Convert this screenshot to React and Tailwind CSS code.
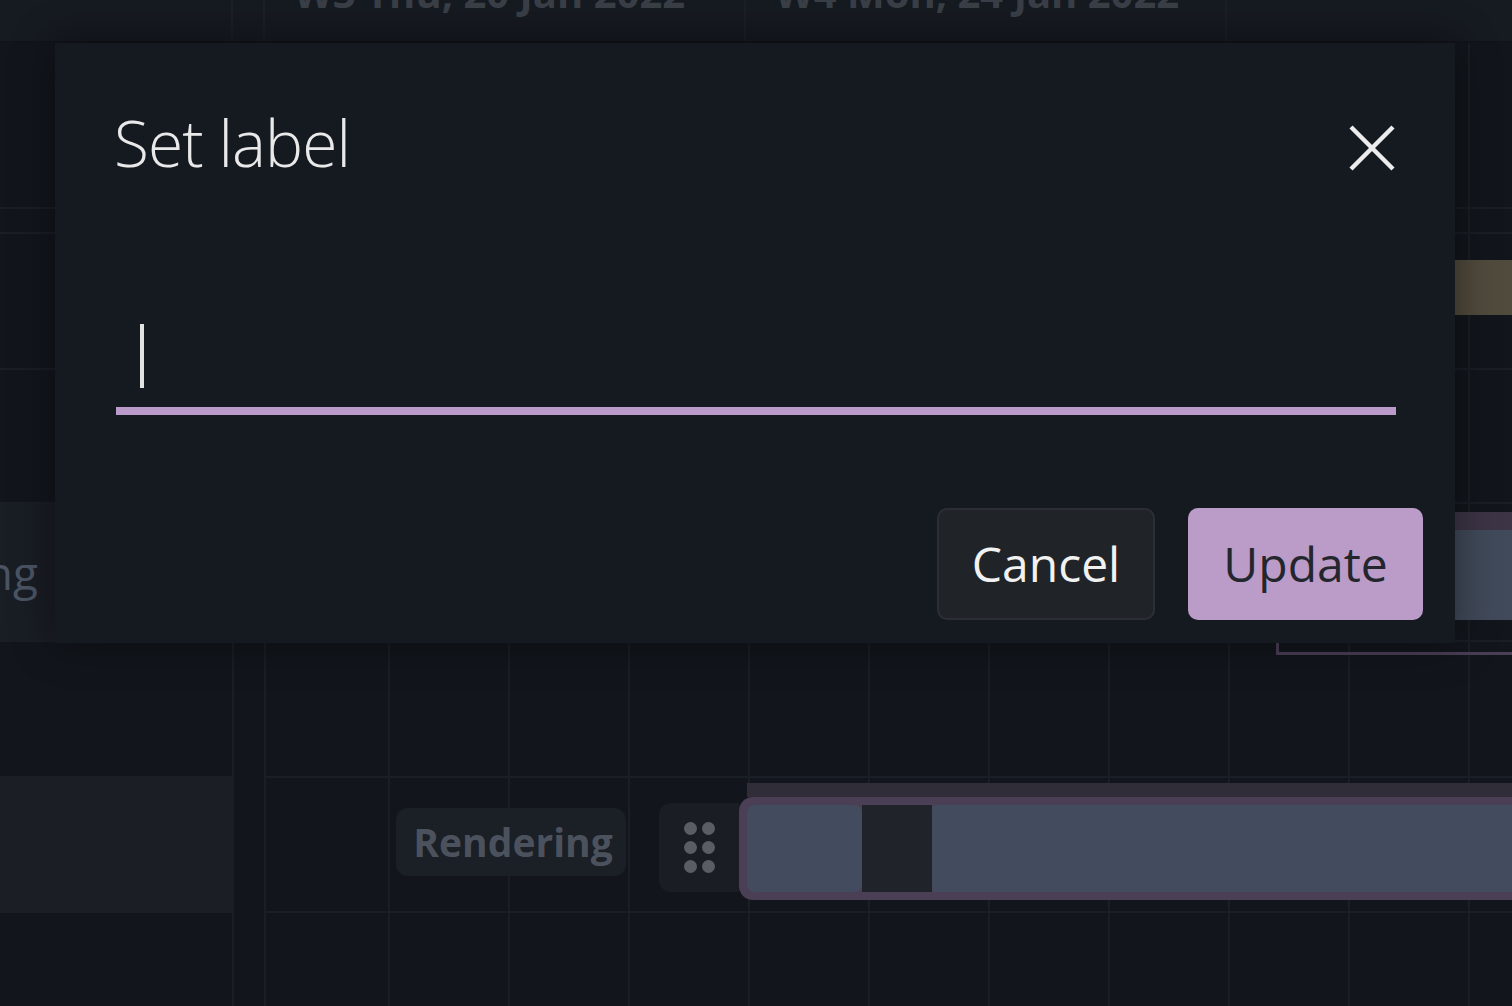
import React from "react";

const headerDays = ["W3 Thu, 20 Jan 2022", "W4 Mon, 24 Jan 2022"];
const gridCols = Array.from({ length: 11 });

function CloseIcon() {
  return (
    <svg width="46" height="46" viewBox="0 0 46 46" fill="none">
      <path d="M2 2L44 44M44 2L2 44" stroke="#ececec" strokeWidth="4.4" />
    </svg>
  );
}

function DragHandle() {
  return (
    <div className="flex h-[89px] w-[80px] items-center justify-center rounded-l-[12px] bg-[#1a1d24]">
      <div className="grid grid-cols-2 gap-x-[5px] gap-y-[6px]">
        {Array.from({ length: 6 }).map((_, i) => (
          <span key={i} className="block h-[13px] w-[13px] rounded-full bg-[#5a5d64]" />
        ))}
      </div>
    </div>
  );
}

export default function App() {
  return (
    <div className="relative h-[1006px] w-[1512px] overflow-hidden bg-[#12161c] font-['Open_Sans',sans-serif]">
      {/* timeline header */}
      <div className="flex h-[43px] border-b-2 border-[#111419] bg-[#161a21]">
        <div className="w-[233px] shrink-0 border-r-2 border-[#1b1f26]" />
        <div className="w-[32px] shrink-0 border-r-2 border-[#1b1f26]" />
        {headerDays.map((d) => (
          <div key={d} className="w-[481px] shrink-0 overflow-hidden border-r-2 border-[#1b1f26] pl-[29px]">
            <div className="-mt-[27px] whitespace-nowrap text-[40px] font-bold leading-none text-[#3a3f47]">{d}</div>
          </div>
        ))}
        <div className="flex-1" />
      </div>

      {/* timeline body */}
      <div className="flex">
        <div className="w-[234px] shrink-0 border-r-2 border-[#1a1e25]">
          <div className="h-[166px] border-b-2 border-[#1a1e25]" />
          <div className="h-[25px] border-b-2 border-[#1a1e25]" />
          <div className="h-[136px] border-b-2 border-[#1a1e25]" />
          <div className="h-[134px] border-b-2 border-[#1a1e25]" />
          <div className="flex h-[138px] items-center border-b-2 border-[#1a1e25] bg-[#191d24]">
            <div className="flex w-[38px] justify-end whitespace-nowrap text-[46px] text-[#4b5464]">Rendering</div>
          </div>
          <div className="h-[136px] border-b-2 border-[#1a1e25]" />
          <div className="h-[135px] border-b-2 border-[#1a1e25] bg-[#1b1e25]" />
          <div className="h-[136px]" />
        </div>
        <div className="w-[32px] shrink-0 border-r-2 border-[#1a1e25]" />

        <div className="relative flex-1">
          <div className="absolute inset-0 flex">
            <div className="w-[122px] shrink-0" />
            {gridCols.map((_, i) => (
              <div key={i} className="w-[120px] shrink-0 border-l-2 border-[#1a1e25]" />
            ))}
          </div>

          <div className="relative">
            <div className="h-[166px] border-b-2 border-[#1a1e25]" />
            <div className="h-[25px] border-b-2 border-[#1a1e25]" />
            <div className="h-[136px] border-b-2 border-[#1a1e25] pt-[26px]">
              <div className="ml-[783px] h-[55px] bg-[#514b3d]" />
            </div>
            <div className="h-[134px] border-b-2 border-[#1a1e25]" />
            <div className="h-[138px] border-b-2 border-[#1a1e25] pt-[8px]">
              <div className="ml-[1000px] h-[18px] bg-[#3d3445]" />
              <div className="ml-[1000px] h-[90px] bg-[#414a5a]" />
            </div>
            <div className="h-[136px] border-b-2 border-[#1a1e25]">
              <div className="ml-[1010px] h-[13px] border-b-[3px] border-l-[3px] border-[#4a3f55]" />
            </div>
            <div className="flex h-[135px] items-start border-b-2 border-[#1a1e25]">
              <div className="ml-[130px] mt-[30px] flex h-[68px] w-[230px] items-center justify-center rounded-[12px] bg-[#1b1f26] pl-[4px] text-[39px] font-bold text-[#4c525d]">
                Rendering
              </div>
              <div className="ml-[33px] mt-[25px]">
                <DragHandle />
              </div>
              <div className="mt-[5px] flex flex-1 flex-col">
                <div className="ml-[8px] h-[14px] bg-[#302c38]" />
                <div className="flex h-[103px] rounded-l-[14px] border-y-[8px] border-l-[8px] border-[#4b3f55] bg-[#4b3f55]">
                  <div className="w-[115px] rounded-[8px] bg-[#434c5e]" />
                  <div className="w-[70px] bg-[#202329]" />
                  <div className="flex-1 rounded-l-[4px] bg-[#434c5e]" />
                </div>
              </div>
            </div>
            <div className="h-[136px]" />
          </div>
        </div>
      </div>

      {/* modal */}
      <div className="absolute left-[55px] top-[43px] flex h-[600px] w-[1400px] flex-col bg-[#151920] shadow-[0_0_40px_rgba(0,0,0,0.45)]">
        <div className="flex items-start justify-between pl-[59px] pr-[60px] pt-[68px]">
          <h2 className="text-[64px] font-[350] leading-none tracking-[-0.9px] text-[#e9e9e9]">Set label</h2>
          <button className="mt-[14px]">
            <CloseIcon />
          </button>
        </div>

        <div className="ml-[61px] mt-[125px] w-[1280px] border-b-[8px] border-[#b99ac8] pb-[19px] pl-[24px] pt-[24px]">
          <span className="block h-[64px] w-[4px] bg-[#e2e2e2]" />
        </div>

        <div className="mt-[93px] flex justify-end gap-[33px] pr-[32px]">
          <button className="flex h-[112px] w-[218px] items-center justify-center rounded-[10px] border-2 border-[#2b2f35] bg-[#202428] text-[48px] text-[#f1f1f1]">
            Cancel
          </button>
          <button className="flex h-[112px] w-[235px] items-center justify-center rounded-[10px] bg-[#bb9cc9] text-[48px] text-[#24262d]">
            Update
          </button>
        </div>
      </div>
    </div>
  );
}
